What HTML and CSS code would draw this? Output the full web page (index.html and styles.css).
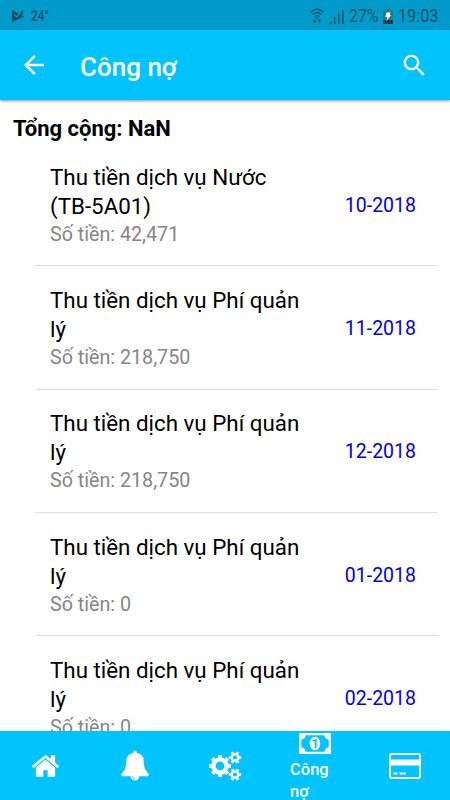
FILE: index.html
```html
<!DOCTYPE html>
<html lang="vi">
<head>
  <meta charset="UTF-8">
  <meta name="viewport" content="width=device-width, initial-scale=1.0">
  <title>Công nợ</title>
  <link rel="stylesheet" href="styles.css">
</head>
<body>

  <!-- Status bar -->
  <div class="status-bar">
    <svg class="play-icon" viewBox="0 0 14 14"><path d="M1 0v14l13-6.500-2.500-1.500L14 2l-1.500-1.500-4 4L1 0z" fill="#175068"/><path class="line" d="M3.500 5.500l2.500 2.500L10 4" stroke="#009bcb" stroke-width="1.300"/></svg>
    <span class="temp">24°</span>
    <div class="status-right">
      <svg class="wifi-icon" viewBox="0 0 14 16">
        <path class="line" d="M.7 4Q7-1.500 13.300 4M2.700 6.300Q7 2.800 11.300 6.300M4.600 8.500Q7 6.700 9.400 8.500" stroke="#175068" stroke-width="1.400"/>
        <path d="M5.500 9.500h3L7 11.300zM2.700 12.500h3.600l-1.800 2.700zM7.700 13.300h3.600L9.500 10.800zM4 10.800h1v2H4zM9 13h1v2H9z" fill="#175068"/>
      </svg>
      <svg class="signal-icon" viewBox="0 0 15 15"><path d="M0 15l3-3v3zM5 8h1.400v7H5zM9 4.500h1.400V15H9zM13 1h1.600v14H13z" fill="#175068"/></svg>
      <span class="battery-text">27%</span>
      <svg class="battery-icon" viewBox="0 0 10 15"><path d="M3 0h4v1.500h3V15H0V1.500h3z" fill="#2b7894"/><path d="M0 11h10v4H0z" fill="#123f50"/><path d="M3.500 3.500h4L6.500 6H8l-4.500 6 1-4H2.500z" fill="#fff"/></svg>
      <span class="time">19:03</span>
    </div>
  </div>

  <!-- Header Section -->
  <header>
    <svg class="back-icon" viewBox="0 0 24 24"><path d="M20 11H7.830l5.590-5.590L12 4l-8 8 8 8 1.410-1.410L7.830 13H20v-2z"/></svg>
    <h1>Công nợ</h1>
    <svg class="search-icon" viewBox="0 0 24 24"><path d="M15.500 14h-.79l-.28-.27C15.410 12.590 16 11.110 16 9.500 16 5.910 13.090 3 9.500 3S3 5.910 3 9.500 5.910 16 9.500 16c1.610 0 3.090-.59 4.230-1.570l.27.28v.79l5 4.990L20.490 19l-4.990-5zm-6 0C7.010 14 5 11.990 5 9.500S7.010 5 9.500 5 14 7.010 14 9.500 11.990 14 9.500 14z"/></svg>
  </header>

  <!-- Debt list -->
  <main>
    <h2>Tổng cộng: NaN</h2>
    <ul class="debt-list">
      <li class="debt-item">
        <div class="debt-info">
          <h3>Thu tiền dịch vụ Nước (TB-5A01)</h3>
          <p>Số tiền: 42,471</p>
        </div>
        <span class="month">10-2018</span>
      </li>
      <li class="debt-item">
        <div class="debt-info">
          <h3>Thu tiền dịch vụ Phí quản lý</h3>
          <p>Số tiền: 218,750</p>
        </div>
        <span class="month">11-2018</span>
      </li>
      <li class="debt-item">
        <div class="debt-info">
          <h3>Thu tiền dịch vụ Phí quản lý</h3>
          <p>Số tiền: 218,750</p>
        </div>
        <span class="month">12-2018</span>
      </li>
      <li class="debt-item">
        <div class="debt-info">
          <h3>Thu tiền dịch vụ Phí quản lý</h3>
          <p>Số tiền: 0</p>
        </div>
        <span class="month">01-2018</span>
      </li>
      <li class="debt-item">
        <div class="debt-info">
          <h3>Thu tiền dịch vụ Phí quản lý</h3>
          <p>Số tiền: 0</p>
        </div>
        <span class="month">02-2018</span>
      </li>
    </ul>
  </main>

  <!-- Bottom tabs -->
  <nav>
    <a href="#home">
      <svg class="home-icon" viewBox="89 250 1614 1290"><path d="M1472 992v480q0 26-19 45t-45 19h-384v-384h-256v384h-384q-26 0-45-19t-19-45v-480q0-1 .5-3t.5-3l575-474 575 474q1 2 1 6zm223-69l-62 74q-8 9-21 11h-3q-13 0-21-7l-692-577-692 577q-12 8-24 7-13-2-21-11l-62-74q-8-10-7-23.500t11-21.500l719-599q32-26 76-26t76 26l244 204v-195q0-14 9-23t23-9h192q14 0 23 9t9 23v408l219 182q10 8 11 21.500t-7 23.500z"/></svg>
    </a>
    <a href="#notifications">
      <svg class="bell-icon" viewBox="64 0 1664 1792"><path d="M912 1696q0-16-16-16-59 0-101.500-42.500t-42.500-101.500q0-16-16-16t-16 16q0 73 51.500 124.500t124.500 51.500q16 0 16-16zm816-288q0 52-38 90t-90 38h-448q0 106-75 181t-181 75-181-75-75-181h-448q-52 0-90-38t-38-90q50-42 91-88t85-119.500 74.500-158.500 50-206 19.500-260q0-152 117-282.500t307-158.500q-8-19-8-39 0-40 28-68t68-28 68 28 28 68q0 20-8 39 190 28 307 158.500t117 282.500q0 139 19.500 260t50 206 74.500 158.500 85 119.500 91 88z"/></svg>
    </a>
    <a href="#services">
      <svg class="gears-icon line" viewBox="0 0 33 30" stroke="#fff">
        <circle cx="11" cy="15" r="6.600" stroke-width="4.400"/>
        <circle cx="11" cy="15" r="9.500" stroke-width="2.800" pathLength="16" stroke-dasharray="1 1" stroke-dashoffset=".5"/>
        <circle cx="26" cy="6.500" r="3.300" stroke-width="2.500"/>
        <circle cx="26" cy="6.500" r="5.200" stroke-width="2.200" pathLength="12" stroke-dasharray="1 1" stroke-dashoffset=".5"/>
        <circle cx="26" cy="23.500" r="3.300" stroke-width="2.500"/>
        <circle cx="26" cy="23.500" r="5.200" stroke-width="2.200" pathLength="12" stroke-dasharray="1 1" stroke-dashoffset=".5"/>
      </svg>
    </a>
    <a href="#debts" class="active">
      <svg class="money-icon" viewBox="0 0 32 21">
        <path fill-rule="evenodd" d="M0 0h32v21H0zM6.500 2.300A4.400 4.400 0 0 1 2.300 6.500v8A4.400 4.400 0 0 1 6.500 18.700h19a4.400 4.400 0 0 1 4.200-4.200v-8a4.400 4.400 0 0 1-4.200-4.200z"/>
        <ellipse cx="16" cy="10.500" rx="5.300" ry="6.800"/>
        <text x="16" y="15">1</text>
      </svg>
      <span>Công nợ</span>
    </a>
    <a href="#card">
      <svg class="card-icon" viewBox="0 0 32 26"><path fill-rule="evenodd" d="M3 0h26a3 3 0 0 1 3 3v20a3 3 0 0 1-3 3H3a3 3 0 0 1-3-3V3a3 3 0 0 1 3-3zM3 2a1 1 0 0 0-1 1v3.500h28V3a1 1 0 0 0-1-1zM2 12.500V23a1 1 0 0 0 1 1h26a1 1 0 0 0 1-1V12.500zM4.500 19.500h4v2h-4zM10.500 19.500h6.500v2h-6.500z"/></svg>
    </a>
  </nav>

</body>
</html>
```
FILE: styles.css
```css
* {
  box-sizing: border-box;
}

body {
  display: flex;
  flex-direction: column;
  height: 100vh;
  margin: 0;
  overflow: hidden;
  font-family: Roboto, sans-serif;
  background-color: #fff;
  color: #000;
}

svg {
  flex: none;
  fill: #fff;
}

.line {
  fill: none;
}

/* Status bar */
.status-bar {
  display: flex;
  flex: none;
  align-items: center;
  height: 30px;
  padding: 2px 11px 0;
  background-color: #009bcb;
  color: #175068;
}

.play-icon {
  width: 13px;
  height: 14px;
}

.temp {
  margin-left: 7px;
  font-size: 14px;
  font-weight: 500;
  transform: scaleX(0.85);
  transform-origin: left;
}

.status-right {
  display: flex;
  align-items: center;
  margin-left: auto;
}

.wifi-icon {
  width: 14px;
  height: 16px;
}

.signal-icon {
  width: 15px;
  height: 15px;
  margin-left: 5px;
}

.battery-text {
  width: 30px;
  margin-left: 5px;
  font-size: 18px;
  line-height: 20px;
  transform: scaleX(0.88);
  transform-origin: left;
}

.battery-icon {
  width: 10px;
  height: 15px;
  margin-left: 4px;
}

.time {
  width: 41px;
  margin-left: 5px;
  font-size: 18px;
  line-height: 20px;
  transform: scaleX(0.9);
  transform-origin: left;
}

/* Header */
header {
  display: flex;
  flex: none;
  align-items: center;
  height: 70px;
  padding: 0 21px 0 19px;
  background-color: #00c3ff;
  box-shadow: 0 1px 3px rgba(0, 0, 0, 0.45);
  color: #fff;
  z-index: 1;
}

.back-icon {
  width: 30px;
  height: 30px;
}

header h1 {
  margin: 4px auto 0 31px;
  font-size: 26px;
  font-weight: 500;
  line-height: 30px;
}

.search-icon {
  width: 29px;
  height: 29px;
}

/* Debt list */
main {
  flex: 1;
  min-height: 0;
  overflow: hidden;
}

main h2 {
  margin: 14px 0 0 13px;
  font-size: 22px;
  font-weight: 700;
  line-height: 29px;
}

.debt-list {
  margin: 0 12px 0 35px;
  padding: 0;
  list-style: none;
}

.debt-item {
  display: flex;
  align-items: center;
  height: 123.3px;
  padding: 2px 22px 0 15px;
  border-bottom: 1px solid #dedede;
}

.debt-info {
  width: 260px;
}

.debt-info h3 {
  margin: 0;
  font-size: 22.350px;
  font-weight: 400;
  line-height: 29px;
}

.debt-info p {
  margin: 0;
  font-size: 19.700px;
  line-height: 27px;
  color: #868686;
}

.month {
  margin-left: auto;
  font-size: 19.500px;
  color: #0000f0;
}

/* Bottom tabs */
nav {
  display: flex;
  flex: none;
  height: 69px;
  background-color: #00c3ff;
}

nav a {
  display: flex;
  flex: 1;
  flex-direction: column;
  align-items: center;
  justify-content: center;
  color: #fff;
  text-decoration: none;
}

.home-icon {
  width: 27px;
  height: 22px;
}

.bell-icon {
  width: 28px;
  height: 31px;
}

.gears-icon {
  width: 33px;
  height: 30px;
}

.active {
  justify-content: flex-start;
  padding-top: 2px;
}

.active span {
  width: 50px;
  margin-top: 5px;
  font-size: 16.500px;
  font-weight: 500;
  line-height: 22px;
}

.money-icon {
  width: 32px;
  height: 21px;
}

.money-icon text {
  font-size: 13px;
  font-weight: 700;
  text-anchor: middle;
  fill: #00c3ff;
}

.card-icon {
  width: 32px;
  height: 26px;
}
```
